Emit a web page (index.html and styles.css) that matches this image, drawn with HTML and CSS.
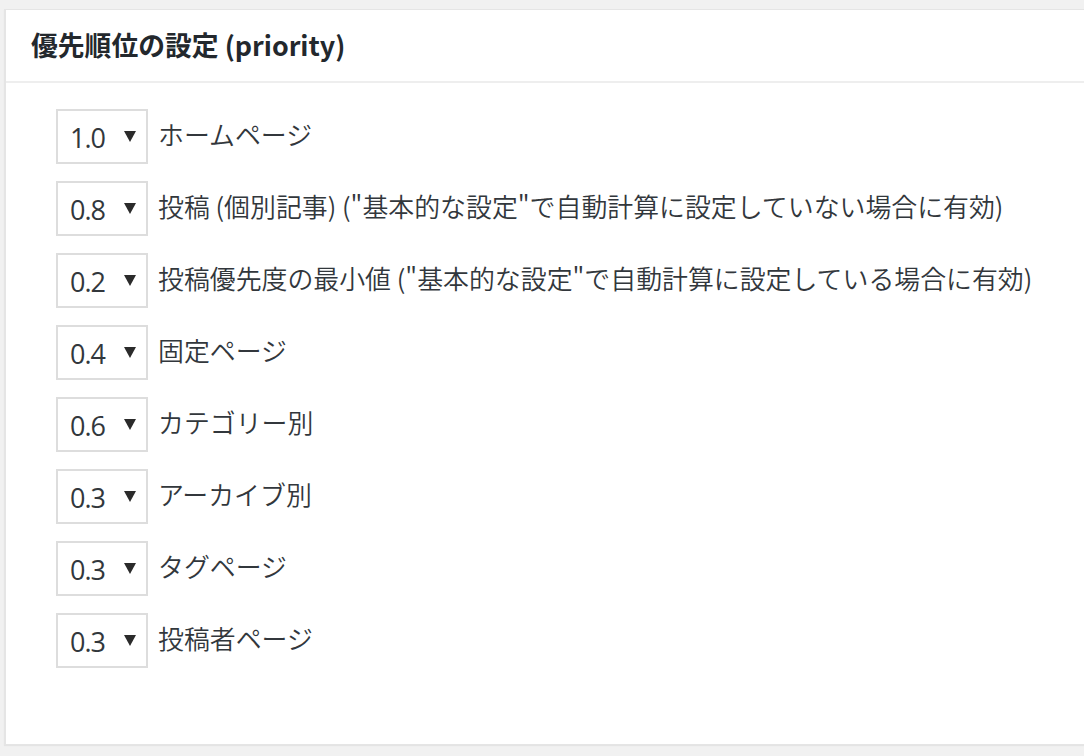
FILE: index.html
```html
<!DOCTYPE html>
<html lang="ja">
<head>
<meta charset="utf-8">
<title>優先順位の設定</title>
<link rel="stylesheet" href="styles.css">
</head>
<body>
<div class="panel">
  <div class="panel-head"><h2 class="title">優先順位の設定 (priority)</h2></div>
  <div class="panel-body">
    <div class="row"><div class="sel"><span class="val">1.0</span><svg class="arr" width="12" height="11" viewBox="0 0 12 11"><path d="M0 0H12L6 11Z" fill="#2b2b2b"/></svg></div><span class="label">ホームページ</span></div>
    <div class="row"><div class="sel"><span class="val">0.8</span><svg class="arr" width="12" height="11" viewBox="0 0 12 11"><path d="M0 0H12L6 11Z" fill="#2b2b2b"/></svg></div><span class="label">投稿 (個別記事) ("基本的な設定"で自動計算に設定していない場合に有効)</span></div>
    <div class="row"><div class="sel"><span class="val">0.2</span><svg class="arr" width="12" height="11" viewBox="0 0 12 11"><path d="M0 0H12L6 11Z" fill="#2b2b2b"/></svg></div><span class="label">投稿優先度の最小値 ("基本的な設定"で自動計算に設定している場合に有効)</span></div>
    <div class="row"><div class="sel"><span class="val">0.4</span><svg class="arr" width="12" height="11" viewBox="0 0 12 11"><path d="M0 0H12L6 11Z" fill="#2b2b2b"/></svg></div><span class="label">固定ページ</span></div>
    <div class="row"><div class="sel"><span class="val">0.6</span><svg class="arr" width="12" height="11" viewBox="0 0 12 11"><path d="M0 0H12L6 11Z" fill="#2b2b2b"/></svg></div><span class="label">カテゴリー別</span></div>
    <div class="row"><div class="sel"><span class="val">0.3</span><svg class="arr" width="12" height="11" viewBox="0 0 12 11"><path d="M0 0H12L6 11Z" fill="#2b2b2b"/></svg></div><span class="label">アーカイブ別</span></div>
    <div class="row"><div class="sel"><span class="val">0.3</span><svg class="arr" width="12" height="11" viewBox="0 0 12 11"><path d="M0 0H12L6 11Z" fill="#2b2b2b"/></svg></div><span class="label">タグページ</span></div>
    <div class="row"><div class="sel"><span class="val">0.3</span><svg class="arr" width="12" height="11" viewBox="0 0 12 11"><path d="M0 0H12L6 11Z" fill="#2b2b2b"/></svg></div><span class="label">投稿者ページ</span></div>
  </div>
</div>
</body>
</html>
```
FILE: styles.css
```css
html, body {
  margin: 0;
  padding: 0;
  background: #f1f1f1;
  overflow: hidden;
  height: 756px;
}
body {
  font-family: "Noto Sans", "Noto Sans CJK JP", sans-serif;
  color: #32373c;
}
.panel {
  margin: 9px 0 0 4px;
  width: 1100px;
  height: 734px;
  background: #fff;
  border: 1px solid #e5e5e5;
  border-width: 1px 0 1px 2px;
  box-shadow: 0 1px 1px rgba(0,0,0,0.05);
}
.panel-head {
  height: 71px;
  border-bottom: 2px solid #eeeeee;
  display: flex;
  align-items: center;
  padding-left: 25px;
}
.title {
  margin: 0;
  font-family: "Noto Sans CJK JP", sans-serif;
  font-size: 26.8px;
  font-weight: 700;
  color: #23282d;
  line-height: 1;
}
.panel-body {
  padding: 26px 0 0 50px;
  display: flex;
  flex-direction: column;
  gap: 17px;
}
.row {
  display: flex;
  align-items: center;
  gap: 10px;
}
.sel {
  box-sizing: border-box;
  width: 92px;
  height: 55px;
  border: 2px solid #dddddd;
  background: #fff;
  display: flex;
  align-items: center;
  padding: 2px 0 0 12px;
}
.val {
  font-family: "Open Sans", "Noto Sans", sans-serif;
  font-size: 27px;
  letter-spacing: -1px;
  color: #32373c;
  width: 54px;
  line-height: 1;
}
.arr {
  margin-top: -2px;
}
.label {
  font-family: "Noto Sans CJK JP", sans-serif;
  font-size: 25.9px;
  font-weight: 350;
  color: #32373c;
  line-height: 1;
  margin-top: -6px;
}
```
